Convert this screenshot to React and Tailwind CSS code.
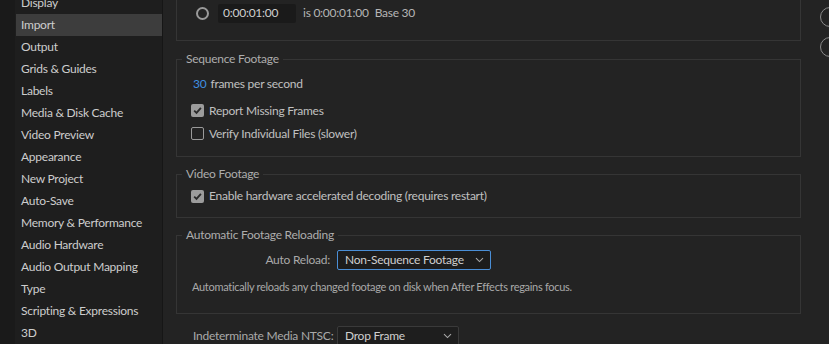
import React from "react";

const items = [
  "Display",
  "Import",
  "Output",
  "Grids & Guides",
  "Labels",
  "Media & Disk Cache",
  "Video Preview",
  "Appearance",
  "New Project",
  "Auto-Save",
  "Memory & Performance",
  "Audio Hardware",
  "Audio Output Mapping",
  "Type",
  "Scripting & Expressions",
  "3D",
];

function Check({ checked }) {
  return checked ? (
    <div className="w-[13px] h-[13px] shrink-0 rounded-[2px] bg-[#9c9c9c] flex items-center justify-center">
      <svg width="11" height="11" viewBox="0 0 11 11">
        <path d="M2.2 5.6 L4.5 7.9 L8.9 2.8" fill="none" stroke="#2a2a2a" strokeWidth="1.8" />
      </svg>
    </div>
  ) : (
    <div className="w-[13px] h-[13px] shrink-0 rounded-[2px] border border-[#9a9a9a]" />
  );
}

function Chevron() {
  return (
    <svg width="9" height="6" viewBox="0 0 9 6">
      <path d="M1 1.2 L4.5 4.6 L8 1.2" fill="none" stroke="#a8a8a8" strokeWidth="1.1" />
    </svg>
  );
}

function Group({ title, className, children }) {
  return (
    <fieldset className={"border border-[#353535] min-w-0 " + className}>
      <legend className="ml-[5px] px-[4px] text-[#adadad] leading-[16px]">{title}</legend>
      {children}
    </fieldset>
  );
}

export default function App() {
  return (
    <div
      className="w-[829px] h-[344px] overflow-hidden flex bg-[#232323] text-[12px] tracking-[-0.25px] text-[#c0c0c0]"
      style={{ fontFamily: "Lato, 'Noto Sans', sans-serif" }}
    >
      <div className="w-[15px] shrink-0 bg-[#1a1a1a]" />
      <div className="w-[147px] shrink-0 bg-[#1e1e1e] border-r border-[#161616] box-content">
        <div className="-mt-[8px] flex flex-col">
          {items.map((it) => (
            <div
              key={it}
              className={
                "h-[22px] flex items-center pl-[5px] ml-[1px] text-[#cdcdcd] whitespace-nowrap " +
                (it === "Import" ? "bg-[#3d3d3d]" : "")
              }
            >
              {it}
            </div>
          ))}
        </div>
      </div>
      <div className="flex-1 flex">
        <div className="w-[638px] shrink-0 pl-[13px] flex flex-col">
          <div className="border-x border-b border-[#353535] pt-[3px] pb-[17px] pl-[19px]">
            <div className="h-[20px] flex items-center">
              <div className="w-[13px] h-[13px] rounded-full border-[2px] border-[#9a9a9a]" />
              <div className="ml-[9px] w-[78px] h-[19px] bg-[#1a1a1a] rounded-[2px] flex items-center pl-[5px] text-[#cfcfcf]">
                0:00:01:00
              </div>
              <span className="ml-[7px] text-[#b5b5b5]">is 0:00:01:00</span>
              <span className="ml-[6px] text-[#b5b5b5]">Base 30</span>
            </div>
          </div>

          <Group title="Sequence Footage" className="mt-[10px]">
            <div className="pl-[14px] pt-[9px] pb-[11px]">
              <div className="h-[16px] flex items-center pl-[2px]">
                <span className="text-[#3f8fe0]">30</span>
                <span className="ml-[4px]">frames per second</span>
              </div>
              <div className="mt-[7px] h-[23px] flex items-center">
                <Check checked />
                <span className="ml-[5px]">Report Missing Frames</span>
              </div>
              <div className="h-[23px] flex items-center">
                <Check />
                <span className="ml-[5px]">Verify Individual Files (slower)</span>
              </div>
            </div>
          </Group>

          <Group title="Video Footage" className="mt-[9px]">
            <div className="pl-[14px] pt-[3px] pb-[10px]">
              <div className="h-[22px] flex items-center">
                <Check checked />
                <span className="ml-[5px]">Enable hardware accelerated decoding (requires restart)</span>
              </div>
            </div>
          </Group>

          <Group title="Automatic Footage Reloading" className="mt-[9px]">
            <div className="pt-[7px] pb-[18px]">
              <div className="h-[20px] flex items-center">
                <span className="w-[153px] text-right text-[#a9a9a9] whitespace-nowrap">Auto Reload:</span>
                <div className="ml-[7px] w-[154px] h-[20px] border border-[#4a8ed6] bg-[#1c1c1c] rounded-[2px] flex items-center justify-between pl-[7px] pr-[6px] text-[#cfcfcf]">
                  <span className="whitespace-nowrap">Non-Sequence Footage</span>
                  <Chevron />
                </div>
              </div>
              <div className="mt-[9px] h-[16px] flex items-center pl-[15px] text-[#a9a9a9] text-[11px] tracking-[-0.3px] whitespace-nowrap">
                Automatically reloads any changed footage on disk when After Effects regains focus.
              </div>
            </div>
          </Group>

          <div className="mt-[12px] h-[20px] flex items-center pl-[17px]">
            <span className="w-[144px] shrink-0 text-[#a9a9a9] whitespace-nowrap">Indeterminate Media NTSC:</span>
            <div className="w-[122px] h-[20px] border border-[#3a3a3a] bg-[#1e1e1e] rounded-[2px] flex items-center justify-between pl-[7px] pr-[6px] text-[#cfcfcf]">
              <span>Drop Frame</span>
              <Chevron />
            </div>
          </div>
        </div>
        <div className="flex-1 pl-[19px] pt-[7px] flex flex-col gap-[10px] overflow-hidden">
          <div className="w-[20px] h-[20px] shrink-0 rounded-full border border-[#8a8a8a]" />
          <div className="w-[20px] h-[20px] shrink-0 rounded-full border border-[#8a8a8a]" />
        </div>
      </div>
    </div>
  );
}
